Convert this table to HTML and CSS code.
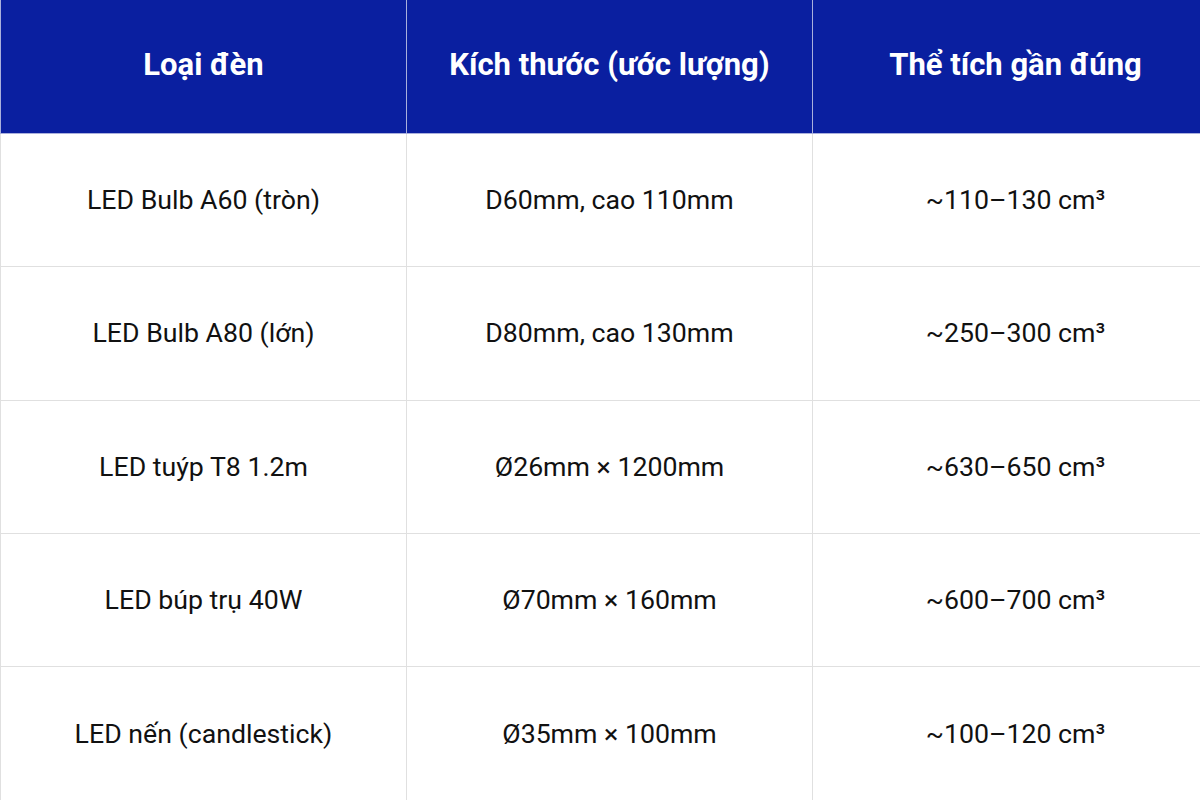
FILE: index.html
```html
<!DOCTYPE html>
<html>
<head>
<meta charset="utf-8">
<link rel="stylesheet" href="styles.css">
</head>
<body>
<table class="spec">
  <thead>
    <tr><th>Loại đèn</th><th>Kích thước (ước lượng)</th><th>Thể tích gần đúng</th></tr>
  </thead>
  <tbody>
    <tr><td>LED Bulb A60 (tròn)</td><td>D60mm, cao 110mm</td><td>~110–130 cm³</td></tr>
    <tr><td>LED Bulb A80 (lớn)</td><td>D80mm, cao 130mm</td><td>~250–300 cm³</td></tr>
    <tr><td>LED tuýp T8 1.2m</td><td>Ø26mm × 1200mm</td><td>~630–650 cm³</td></tr>
    <tr><td>LED búp trụ 40W</td><td>Ø70mm × 160mm</td><td>~600–700 cm³</td></tr>
    <tr><td>LED nến (candlestick)</td><td>Ø35mm × 100mm</td><td>~100–120 cm³</td></tr>
  </tbody>
</table>
</body>
</html>
```
FILE: styles.css
```css
html, body {
  margin: 0;
  padding: 0;
  width: 1200px;
  height: 800px;
  overflow: hidden;
  background: #ffffff;
}
.spec {
  border-collapse: collapse;
  table-layout: fixed;
  width: 1218px;
  font-family: Roboto, "Noto Sans", sans-serif;
}
.spec th, .spec td {
  width: 406px;
  height: 133.4px;
  padding: 0;
  text-align: center;
  vertical-align: middle;
  border: 1px solid #e0e0e0;
  box-sizing: border-box;
}
.spec th {
  background: #0a1fa0;
  color: #ffffff;
  font-weight: 700;
  font-size: 31px;
  border-color: #aab0dc;
  border-top: none;
  padding-bottom: 4px;
}
.spec td {
  color: #111111;
  font-size: 26.7px;
  font-weight: 400;
}
```
